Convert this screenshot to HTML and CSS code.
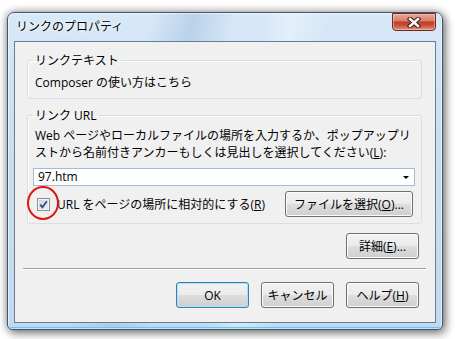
FILE: index.html
```html
<!DOCTYPE html>
<html lang="ja">
<head>
  <meta charset="UTF-8" />
  <title>リンクのプロパティ</title>
  <link rel="stylesheet" href="styles.css">
</head>
<body>
  <div class="window">
    <div class="titlebar">
      <span class="title">リンクのプロパティ</span>
      <button class="close" title="閉じる">
        <svg width="14" height="11" viewBox="0 0 14 11">
          <path d="M3 2 L11 9 M11 2 L3 9" stroke="#3b1d17" stroke-width="4.4" stroke-linecap="square" fill="none" />
          <path d="M3 2 L11 9 M11 2 L3 9" stroke="#ffffff" stroke-width="2.4" stroke-linecap="square" fill="none" />
        </svg>
      </button>
    </div>

    <div class="client">
      <!-- Link text -->
      <fieldset class="group group-text">
        <legend>リンクテキスト</legend>
        <p>Composer の使い方はこちら</p>
      </fieldset>

      <!-- Link URL -->
      <fieldset class="group group-url">
        <legend>リンク URL</legend>
        <p>Web ページやローカルファイルの場所を入力するか、ポップアップリ<br>ストから名前付きアンカーもしくは見出しを選択してください(<u>L</u>):</p>
        <div class="combo">
          <span>97.htm</span>
          <span class="arrow"></span>
        </div>
        <div class="check-row">
          <label class="check">
            <span class="box">
              <svg width="11" height="11" viewBox="0 0 11 11">
                <path d="M2.2 5.6 L4.4 8.2 L8.8 2.2" stroke="#2f4f93" stroke-width="1.9" fill="none" />
              </svg>
            </span>
            <span class="check-text">URL をページの場所に相対的にする(<u>R</u>)</span>
          </label>
          <button class="btn btn-wide">ファイルを選択(<u>O</u>)...</button>
        </div>
      </fieldset>

      <div class="detail-row">
        <button class="btn">詳細(<u>E</u>)...</button>
      </div>

      <div class="separator"></div>

      <div class="actions">
        <button class="btn btn-default">OK</button>
        <button class="btn">キャンセル</button>
        <button class="btn">ヘルプ(<u>H</u>)</button>
      </div>
    </div>
  </div>
</body>
</html>
```

FILE: styles.css
```css
*,
*::before,
*::after {
  margin: 0;
  padding: 0;
  box-sizing: border-box;
}

body {
  background: #ffffff;
  font-family: "Open Sans", "Noto Sans CJK JP", sans-serif;
  font-size: 12px;
  color: #000;
  padding: 12px 0 0 7px;
  height: 339px;
  overflow: hidden;
}

/* Window frame */
.window {
  width: 436px;
  height: 318px;
  display: flex;
  flex-direction: column;
  padding: 0 6px 6px;
  border: 1px solid #46566a;
  border-radius: 7px 7px 5px 5px;
  background:
    linear-gradient(105deg, rgba(255, 255, 255, 0) 28%, rgba(150, 185, 220, 0.45) 36%, rgba(255, 255, 255, 0) 44%),
    linear-gradient(100deg, rgba(255, 255, 255, 0) 52%, rgba(255, 255, 255, 0.35) 58%, rgba(255, 255, 255, 0) 66%),
    linear-gradient(to bottom, #d7e8f8, #c9def2 40%, #c2d9ef);
  box-shadow:
    inset 0 0 0 1px rgba(255, 255, 255, 0.55),
    inset 0 -2px 0 #62c8f2,
    0 0 9px rgba(0, 0, 0, 0.45),
    3px 4px 10px rgba(0, 0, 0, 0.35);
}

.titlebar {
  height: 28px;
  display: flex;
  justify-content: space-between;
  align-items: flex-start;
}

.title {
  margin: 4px 0 0 2px;
  line-height: 17px;
  font-family: "Noto Sans CJK JP", sans-serif;
  text-shadow: 0 0 6px #fff, 0 0 3px #fff;
}

.close {
  width: 44px;
  height: 18px;
  border: 1px solid #6d2a1f;
  border-radius: 0 0 4px 4px;
  background: linear-gradient(to bottom, #eaa898, #d97e69 42%, #c23d26 50%, #c84e35 70%, #e0957c);
  box-shadow: inset 0 0 0 1px rgba(255, 220, 210, 0.45);
  display: flex;
  align-items: center;
  justify-content: center;
}

/* Client area */
.client {
  flex: 1;
  background: #f0f0f0;
  border: 1px solid #6c7c8c;
  padding: 11px 13px 0 12px;
  display: flex;
  flex-direction: column;
}

.group {
  border: 1px solid #d5dfe5;
  border-radius: 3px;
  padding: 6px 6px 7px 7px;
  min-width: 0;
  box-shadow: inset 1px 1px 0 #fbfcfd;
}

.group legend {
  padding: 0 2px;
  margin-left: -2px;
  line-height: 15px;
}

.group p {
  line-height: 17px;
  white-space: nowrap;
}

.group-url {
  margin-top: 9px;
  padding-top: 4px;
  padding-bottom: 6px;
}

.combo {
  height: 18px;
  margin: 7px 0 0 -2px;
  padding: 0 5px 0 4px;
  border: 1px solid #a2bcd6;
  background: #fff;
  display: flex;
  align-items: center;
  justify-content: space-between;
  line-height: 16px;
}

.arrow {
  width: 0;
  height: 0;
  border-left: 3px solid transparent;
  border-right: 3px solid transparent;
  border-top: 3px solid #000;
  margin-top: 1px;
}

.check-row {
  display: flex;
  align-items: center;
  justify-content: space-between;
  height: 26px;
  margin-top: 5px;
}

.check {
  display: flex;
  align-items: center;
  gap: 7px;
  margin-left: 2px;
  line-height: 17px;
}

.box {
  width: 13px;
  height: 13px;
  border: 1px solid #8e8f8f;
  background: linear-gradient(135deg, #cfd3d8, #eef0f2);
  box-shadow: inset 0 0 0 1px #f4f4f4;
  position: relative;
  display: flex;
}

/* red annotation circle drawn over the checkbox */
.box::after {
  content: "";
  position: absolute;
  left: -11px;
  top: -13px;
  width: 32px;
  height: 34px;
  border: 2.5px solid #e2150f;
  border-radius: 50%;
  z-index: 2;
}

/* Buttons */
.btn {
  width: 73px;
  height: 26px;
  border: 1px solid #707070;
  border-radius: 3px;
  background: linear-gradient(to bottom, #f2f2f2, #ebebeb 48%, #dddddd 52%, #cfcfcf);
  box-shadow: inset 0 0 0 1px #fbfbfb;
  font-family: inherit;
  font-size: 12px;
  color: #000;
}

.btn-wide {
  width: 128px;
  margin-right: 2px;
}

.btn-default {
  border-color: #3c7fb1;
  box-shadow: inset 0 0 0 1px #a6e2f8;
}

.detail-row {
  display: flex;
  justify-content: flex-end;
  margin-top: 9px;
  padding-right: 3px;
}

.separator {
  margin: 9px -4px 0;
  border-top: 1px solid #a0a0a0;
  border-bottom: 1px solid #ffffff;
}

.actions {
  display: flex;
  justify-content: flex-end;
  gap: 12px;
  margin-top: 12px;
  padding-right: 3px;
}
```
